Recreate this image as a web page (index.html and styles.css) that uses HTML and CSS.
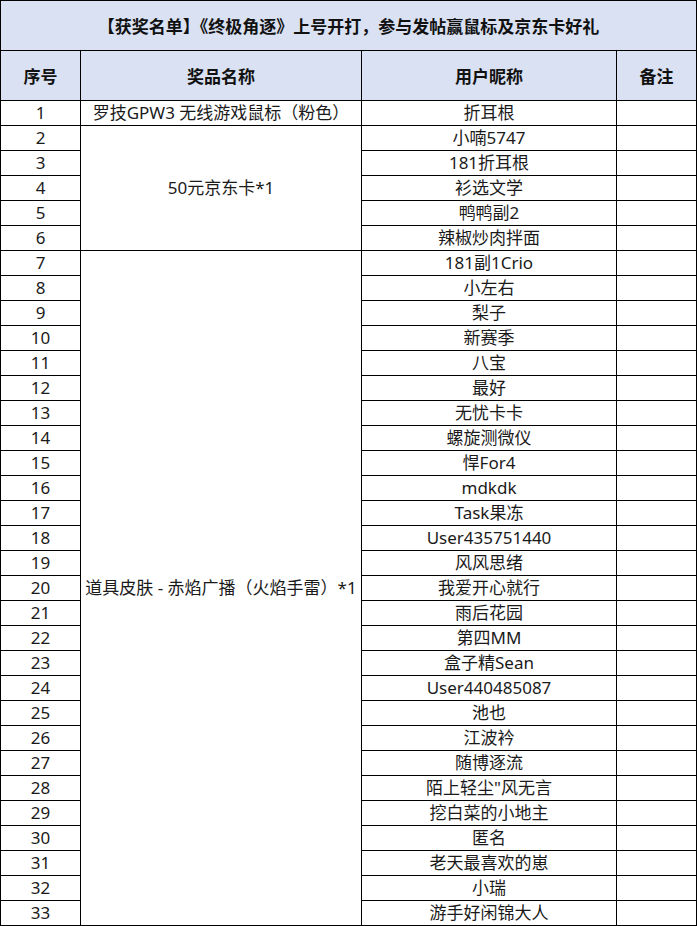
FILE: index.html
```html
<!DOCTYPE html>
<html lang="zh-CN">
<head>
<meta charset="utf-8">
<title>获奖名单</title>
<link rel="stylesheet" href="styles.css">
</head>
<body>
<table class="sheet">
  <colgroup>
    <col class="c-no">
    <col class="c-prize">
    <col class="c-user">
    <col class="c-note">
  </colgroup>
  <thead>
    <tr class="title-row"><th colspan="4">【获奖名单】《终极角逐》上号开打，参与发帖赢鼠标及京东卡好礼</th></tr>
    <tr class="head-row"><th>序号</th><th>奖品名称</th><th>用户昵称</th><th>备注</th></tr>
  </thead>
  <tbody>
    <tr><td>1</td><td>罗技GPW3 无线游戏鼠标（粉色）</td><td>折耳根</td><td></td></tr>
    <tr><td>2</td><td rowspan="5">50元京东卡*1</td><td>小喃5747</td><td></td></tr>
    <tr><td>3</td><td>181折耳根</td><td></td></tr>
    <tr><td>4</td><td>衫选文学</td><td></td></tr>
    <tr><td>5</td><td>鸭鸭副2</td><td></td></tr>
    <tr><td>6</td><td>辣椒炒肉拌面</td><td></td></tr>
    <tr><td>7</td><td rowspan="27">道具皮肤 - 赤焰广播（火焰手雷）*1</td><td>181副1Crio</td><td></td></tr>
    <tr><td>8</td><td>小左右</td><td></td></tr>
    <tr><td>9</td><td>梨子</td><td></td></tr>
    <tr><td>10</td><td>新赛季</td><td></td></tr>
    <tr><td>11</td><td>八宝</td><td></td></tr>
    <tr><td>12</td><td>最好</td><td></td></tr>
    <tr><td>13</td><td>无忧卡卡</td><td></td></tr>
    <tr><td>14</td><td>螺旋测微仪</td><td></td></tr>
    <tr><td>15</td><td>悍For4</td><td></td></tr>
    <tr><td>16</td><td>mdkdk</td><td></td></tr>
    <tr><td>17</td><td>Task果冻</td><td></td></tr>
    <tr><td>18</td><td>User435751440</td><td></td></tr>
    <tr><td>19</td><td>风风思绪</td><td></td></tr>
    <tr><td>20</td><td>我爱开心就行</td><td></td></tr>
    <tr><td>21</td><td>雨后花园</td><td></td></tr>
    <tr><td>22</td><td>第四MM</td><td></td></tr>
    <tr><td>23</td><td>盒子精Sean</td><td></td></tr>
    <tr><td>24</td><td>User440485087</td><td></td></tr>
    <tr><td>25</td><td>池也</td><td></td></tr>
    <tr><td>26</td><td>江波衿</td><td></td></tr>
    <tr><td>27</td><td>随博逐流</td><td></td></tr>
    <tr><td>28</td><td>陌上轻尘"风无言</td><td></td></tr>
    <tr><td>29</td><td>挖白菜的小地主</td><td></td></tr>
    <tr><td>30</td><td>匿名</td><td></td></tr>
    <tr><td>31</td><td>老天最喜欢的崽</td><td></td></tr>
    <tr><td>32</td><td>小瑞</td><td></td></tr>
    <tr><td>33</td><td>游手好闲锦大人</td><td></td></tr>
  </tbody>
</table>
</body>
</html>
```
FILE: styles.css
```css
html, body {
  margin: 0;
  padding: 0;
  background: #ffffff;
}
.sheet {
  border-collapse: collapse;
  table-layout: fixed;
  width: 697px;
  font-family: "Noto Sans", "Noto Sans CJK SC", sans-serif;
  color: #1a1a1a;
}
.c-no { width: 80px; }
.c-prize { width: 281px; }
.c-user { width: 255px; }
.c-note { width: 80px; }
.sheet th, .sheet td {
  border: 1px solid #000;
  padding: 0;
  text-align: center;
  vertical-align: middle;
  white-space: nowrap;
  overflow: hidden;
}
.sheet th {
  background: #d9e1f2;
  font-weight: 700;
  color: #111;
}
.title-row th {
  height: 49px;
  font-size: 17px;
}
.head-row th {
  height: 49px;
  font-size: 17px;
}
.sheet td {
  height: 24px;
  font-size: 17px;
  line-height: 24px;
}
```
